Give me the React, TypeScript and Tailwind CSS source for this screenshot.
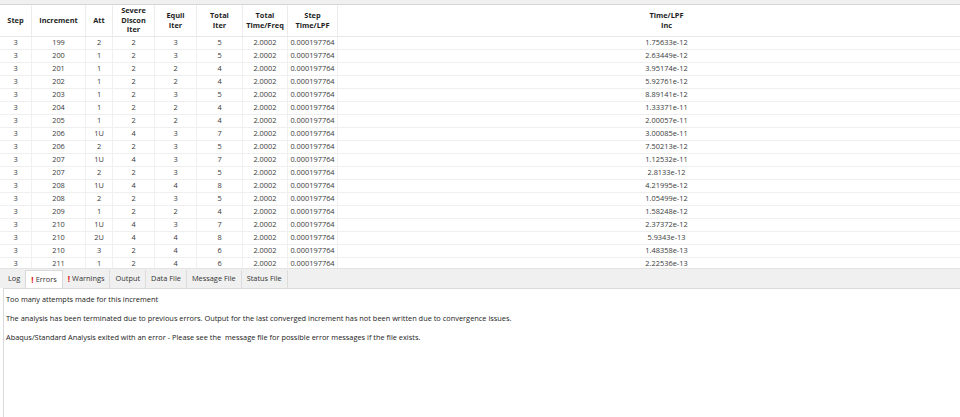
import React from 'react';

type Row = [string, string, string, string, string, string, string, string, string];

const rows: Row[] = [
  ['3', '199', '2', '2', '3', '5', '2.0002', '0.000197764', '1.75633e-12'],
  ['3', '200', '1', '2', '3', '5', '2.0002', '0.000197764', '2.63449e-12'],
  ['3', '201', '1', '2', '2', '4', '2.0002', '0.000197764', '3.95174e-12'],
  ['3', '202', '1', '2', '2', '4', '2.0002', '0.000197764', '5.92761e-12'],
  ['3', '203', '1', '2', '3', '5', '2.0002', '0.000197764', '8.89141e-12'],
  ['3', '204', '1', '2', '2', '4', '2.0002', '0.000197764', '1.33371e-11'],
  ['3', '205', '1', '2', '2', '4', '2.0002', '0.000197764', '2.00057e-11'],
  ['3', '206', '1U', '4', '3', '7', '2.0002', '0.000197764', '3.00085e-11'],
  ['3', '206', '2', '2', '3', '5', '2.0002', '0.000197764', '7.50213e-12'],
  ['3', '207', '1U', '4', '3', '7', '2.0002', '0.000197764', '1.12532e-11'],
  ['3', '207', '2', '2', '3', '5', '2.0002', '0.000197764', '2.8133e-12'],
  ['3', '208', '1U', '4', '4', '8', '2.0002', '0.000197764', '4.21995e-12'],
  ['3', '208', '2', '2', '3', '5', '2.0002', '0.000197764', '1.05499e-12'],
  ['3', '209', '1', '2', '2', '4', '2.0002', '0.000197764', '1.58248e-12'],
  ['3', '210', '1U', '4', '3', '7', '2.0002', '0.000197764', '2.37372e-12'],
  ['3', '210', '2U', '4', '4', '8', '2.0002', '0.000197764', '5.9343e-13'],
  ['3', '210', '3', '2', '4', '6', '2.0002', '0.000197764', '1.48358e-13'],
  ['3', '211', '1', '2', '4', '6', '2.0002', '0.000197764', '2.22536e-13'],
];

const headers: string[][] = [
  ['Step'],
  ['Increment'],
  ['Att'],
  ['Severe', 'Discon', 'Iter'],
  ['Equil', 'Iter'],
  ['Total', 'Iter'],
  ['Total', 'Time/Freq'],
  ['Step', 'Time/LPF'],
  ['Time/LPF', 'Inc'],
];

const widths = ['w-[32px]', 'w-[54px]', 'w-[27px]', 'w-[42px]', 'w-[42px]', 'w-[46px]', 'w-[45px]', 'w-[50px]', 'w-[658px]'];

const tabs = [
  { label: 'Log', bang: false },
  { label: 'Errors', bang: true, active: true },
  { label: 'Warnings', bang: true },
  { label: 'Output', bang: false },
  { label: 'Data File', bang: false },
  { label: 'Message File', bang: false },
  { label: 'Status File', bang: false },
];

const messages = [
  'Too many attempts made for this increment',
  'The analysis has been terminated due to previous errors. Output for the last converged increment has not been written due to convergence issues.',
  'Abaqus/Standard Analysis exited with an error - Please see the  message file for possible error messages if the file exists.',
];

export default function App() {
  return (
    <div className="w-[960px] h-[417px] bg-white overflow-hidden flex flex-col text-[7.4px] text-[#3a3a3a] [font-family:'Open_Sans','Noto_Sans',sans-serif]">
      <div className="h-[5px] shrink-0 bg-[#f0f0f0] border-b border-[#d6d6d6]" />

      {/* results table */}
      <div className="h-[263px] shrink-0 overflow-hidden">
        <div className="flex h-[32px] border-b border-[#e8e8e8]">
          {headers.map((h, i) => (
            <div
              key={i}
              className={`${widths[i]} shrink-0 flex flex-col items-center justify-center border-r border-[#ececec] font-bold text-[#1e1e1e] leading-[9.5px]`}
            >
              {h.map((line) => (
                <span key={line}>{line}</span>
              ))}
            </div>
          ))}
        </div>
        {rows.map((r, ri) => (
          <div key={ri} className="flex h-[13px] border-b border-[#efefef]">
            {r.map((c, ci) => (
              <div
                key={ci}
                className={`${widths[ci]} shrink-0 flex items-center justify-center border-r border-[#f0f0f0] leading-none`}
              >
                {c}
              </div>
            ))}
          </div>
        ))}
      </div>

      {/* tabs */}
      <div className="h-[20px] shrink-0 bg-[#f0f0f0] flex items-end pl-[3px] border-t border-[#e3e3e3]">
        {tabs.map((t) => (
          <div
            key={t.label}
            className={`h-[18px] px-[5px] flex items-center gap-[2px] text-[#333] ${
              t.active ? 'bg-white border-x border-t border-[#d9d9d9]' : t.label === 'Log' ? '' : 'border-r border-[#dcdcdc]'
            }`}
          >
            {t.bang && <span className="text-[#e01010] font-bold text-[8px]">!</span>}
            <span>{t.label}</span>
          </div>
        ))}
      </div>

      {/* message pane */}
      <div className="flex-1 ml-[3px] border-l border-t border-[#dadada] bg-white pt-[5px] pl-[2px] flex flex-col gap-[9px] leading-[10px] text-[#222]">
        {messages.map((m) => (
          <div key={m} className="whitespace-pre">{m}</div>
        ))}
      </div>
    </div>
  );
}
